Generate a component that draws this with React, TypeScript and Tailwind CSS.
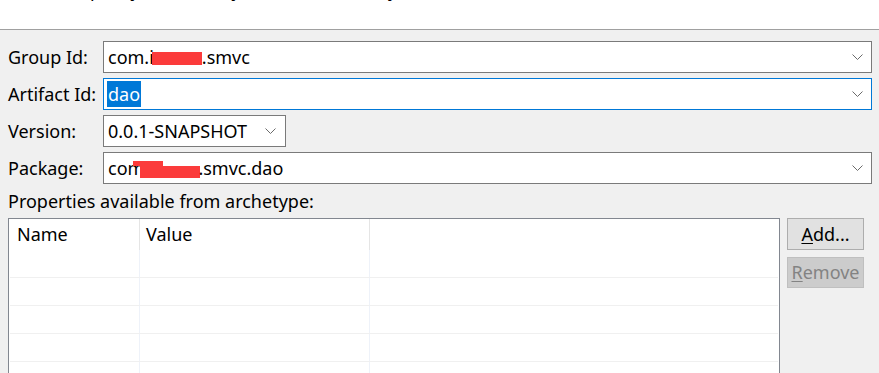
import React from "react";

const Chevron: React.FC = () => (
  <svg width="11" height="7" viewBox="0 0 11 7" className="shrink-0">
    <polyline points="0.5,0.5 5.5,5.5 10.5,0.5" fill="none" stroke="#6a6a6a" strokeWidth="1" />
  </svg>
);

const Redact: React.FC<{ className?: string }> = ({ className }) => (
  <span className={"inline-block bg-[#fb3b3b] " + (className ?? "")} />
);

const App: React.FC = () => {
  const rows = [0, 1, 2, 3, 4];

  return (
    <div className="w-[879px] h-[373px] bg-[#f0f0f0] overflow-hidden text-[18px] text-black font-['Noto_Sans',sans-serif]">
      {/* wizard description strip, mostly scrolled off */}
      <div className="h-[30px] bg-white border-b border-[#a0a0a0] overflow-hidden">
        <div className="pl-[80px] -mt-[22px] leading-[24px] whitespace-nowrap">
          Specify the identity and the home key
        </div>
      </div>

      <div className="pt-[11px] pl-[8px] pr-[7px] flex flex-col gap-[5px]">
        <div className="flex items-center h-8">
          <label className="w-[95px]">Group Id:</label>
          <div className="flex-1 h-8 bg-white border border-[#7a7a7a] flex items-center pl-[4px] pr-[8px]">
            <span className="flex-1 flex items-center whitespace-nowrap">
              com.i<Redact className="w-[50px] h-[13px] mt-[3px] -ml-[2px]" />.smvc
            </span>
            <Chevron />
          </div>
        </div>

        <div className="flex items-center h-8">
          <label className="w-[95px]">Artifact Id:</label>
          <div className="flex-1 h-8 bg-white border border-[#0078d7] flex items-center pl-[3px] pr-[8px]">
            <span className="flex-1">
              <span className="bg-[#0078d7] text-white px-[1px] py-[1px]">dao</span>
            </span>
            <Chevron />
          </div>
        </div>

        <div className="flex items-center h-8">
          <label className="w-[95px]">Version:</label>
          <div className="w-[183px] h-8 bg-white border border-[#7a7a7a] flex items-center pl-[4px] pr-[9px]">
            <span className="flex-1 whitespace-nowrap">0.0.1-SNAPSHOT</span>
            <Chevron />
          </div>
        </div>

        <div className="flex items-center h-8">
          <label className="w-[95px]">Package:</label>
          <div className="flex-1 h-8 bg-white border border-[#7a7a7a] flex items-center pl-[4px] pr-[8px]">
            <span className="flex-1 flex items-center whitespace-nowrap">
              com
              <span className="flex flex-col -ml-[11px] mt-[2px]">
                <Redact className="w-[30px] h-[5px]" />
                <Redact className="w-[60px] h-[12px] ml-[7px]" />
              </span>
              <span className="-ml-[2px]">.smvc.dao</span>
            </span>
            <Chevron />
          </div>
        </div>

        <div className="h-[29px] flex items-center pb-[4px]">Properties available from archetype:</div>
      </div>

      <div className="flex pl-[8px] gap-[7px]">
        <div className="w-[772px] h-[200px] bg-white border border-[#828790] border-b-0">
          <div className="flex h-[31px] items-center">
            <div className="w-[131px] h-full pl-[8px] flex items-center border-r border-[#e5e5e5]">Name</div>
            <div className="w-[230px] h-full pl-[6px] flex items-center border-r border-[#e5e5e5]">Value</div>
            <div className="flex-1" />
          </div>
          {rows.map((r) => (
            <div key={r} className="flex h-[28px] mx-[1px] border-b border-[#f0f0f0]">
              <div className="w-[130px] border-r border-[#eef2f9]" />
              <div className="w-[230px] border-r border-[#eef2f9]" />
              <div className="flex-1" />
            </div>
          ))}
        </div>

        <div className="flex flex-col gap-[7px]">
          <button className="w-[77px] h-[32px] bg-[#e1e1e1] border border-[#adadad] flex items-center justify-center">
            <span>
              <span className="underline underline-offset-2">A</span>dd...
            </span>
          </button>
          <button className="w-[77px] h-[31px] bg-[#cccccc] border border-[#bfbfbf] text-[#838383] flex items-center justify-center">
            <span>
              <span className="underline underline-offset-2">R</span>emove
            </span>
          </button>
        </div>
      </div>
    </div>
  );
};

export default App;
